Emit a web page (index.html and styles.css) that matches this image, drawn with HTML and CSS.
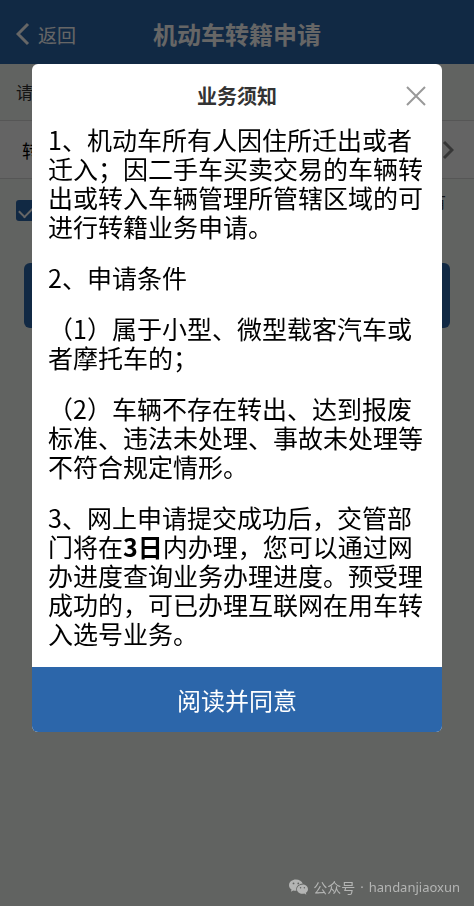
FILE: index.html
```html
<!DOCTYPE html>
<html lang="zh-CN">
<head>
<meta charset="utf-8">
<meta name="viewport" content="width=device-width, initial-scale=1">
<title>机动车转籍申请</title>
<link rel="stylesheet" href="styles.css">
</head>
<body>
<div class="page">
  <header class="topbar">
    <a class="back" href="#">
      <svg class="back-icon" viewBox="0 0 14 24" aria-hidden="true"><path d="M12 2 2 12 12 22"/></svg>
      <span>返回</span>
    </a>
    <h1 class="topbar-title">机动车转籍申请</h1>
  </header>
  <main>
    <p class="hint">请</p>
    <a class="row" href="#">
      <span>转</span>
      <svg class="row-icon" viewBox="0 0 12 20" aria-hidden="true"><path d="M2 2 10 10 2 18"/></svg>
    </a>
    <label class="consent">
      <input class="consent-box" type="checkbox" checked>
      <span class="consent-text">有</span>
    </label>
    <button class="next" type="button" aria-label="下一步"></button>
  </main>
</div>

<div class="overlay">
  <section class="dialog" role="dialog" aria-modal="true" aria-labelledby="notice-title">
    <header class="dialog-head">
      <h2 class="dialog-title" id="notice-title">业务须知</h2>
      <button class="close" type="button" aria-label="关闭">
        <svg class="close-icon" viewBox="0 0 20 20" aria-hidden="true"><path d="M1 1 19 19M19 1 1 19"/></svg>
      </button>
    </header>
    <div class="dialog-body">
      <p>1、机动车所有人因住所迁出或者迁入；因二手车买卖交易的车辆转出或转入车辆管理所管辖区域的可进行转籍业务申请。</p>
      <p>2、申请条件</p>
      <p>（1）属于小型、微型载客汽车或者摩托车的；</p>
      <p>（2）车辆不存在转出、达到报废标准、违法未处理、事故未处理等不符合规定情形。</p>
      <p>3、网上申请提交成功后，交管部门将在<strong>3日</strong>内办理，您可以通过网办进度查询业务办理进度。预受理成功的，可已办理互联网在用车转入选号业务。</p>
    </div>
    <button class="agree" type="button">阅读并同意</button>
  </section>
  <div class="watermark">
    <svg class="wechat" viewBox="0 0 36 30" aria-hidden="true">
      <path class="bubble" fill-rule="evenodd" d="M13 1C6 1 0 5.700 0 11.700c0 3.400 1.900 6.300 4.800 8.200L3.600 24l4.500-2.400c1.600.4 3.200.7 4.900.7h1.100C12 14.500 18.500 8.600 26 8.800 24.700 4.300 19.400 1 13 1ZM8.600 6.500a1.700 1.700 0 1 1 0 3.400 1.700 1.700 0 0 1 0-3.400Zm9 0a1.700 1.700 0 1 1 0 3.400 1.700 1.700 0 0 1 0-3.400Z"/>
      <path class="bubble" fill-rule="evenodd" d="M25.500 10.500c-5.800 0-10.500 3.900-10.500 8.800S19.700 28 25.500 28c1.200 0 2.400-.2 3.500-.5l3.800 2-1-3.400c2.600-1.600 4.200-4 4.200-6.800 0-4.900-4.700-8.800-10.500-8.800Zm-3.600 4.700a1.400 1.400 0 1 1 0 2.800 1.400 1.400 0 0 1 0-2.800Zm7.200 0a1.400 1.400 0 1 1 0 2.800 1.400 1.400 0 0 1 0-2.800Z"/>
    </svg>
    <span>公众号</span>
    <span class="latin">·</span>
    <span class="latin">handanjiaoxun</span>
  </div>
</div>
</body>
</html>
```
FILE: styles.css
```css
* {
  box-sizing: border-box;
}

body {
  margin: 0;
  min-height: 100vh;
  background: #f3f7f3;
  color: #333;
  font-family: "Noto Sans CJK SC", "Noto Sans", sans-serif;
}

h1, h2, p {
  margin: 0;
}

button {
  border: 0;
  font-family: inherit;
}

a {
  color: inherit;
  text-decoration: none;
}

svg {
  fill: none;
  stroke: currentColor;
}

.topbar {
  display: grid;
  grid-template-columns: 1fr auto 1fr;
  align-items: center;
  height: 64px;
  padding: 4px 16px 0;
  background: #2c66aa;
  color: #fff;
}

.back {
  display: flex;
  align-items: center;
  gap: 8px;
  font-size: 19px;
}

.back-icon {
  width: 14px;
  height: 24px;
  stroke-width: 3;
}

.topbar-title {
  font-size: 24px;
  line-height: 36px;
  font-weight: 700;
}

.hint {
  padding: 0 16px;
  font-size: 17px;
  line-height: 56px;
}

.row {
  display: flex;
  align-items: center;
  justify-content: space-between;
  height: 59px;
  padding: 0 20px 0 22px;
  border: solid #d8d8d8;
  border-width: 1px 0;
  background: #fafafa;
  color: #000;
  font-size: 18px;
}

.row-icon {
  width: 12px;
  height: 20px;
  color: #888;
  stroke-width: 3;
}

.consent {
  display: flex;
  justify-content: space-between;
  padding: 10px 28px 0 16px;
  font-size: 16px;
}

.consent-box {
  appearance: none;
  width: 21px;
  height: 21px;
  margin: 11px 0 0;
  padding: 5px 3px;
  border-radius: 3px;
  background: #2c66aa;
}

.consent-box:checked::before {
  content: "";
  display: block;
  width: 14px;
  height: 7px;
  border: solid #fff;
  border-width: 0 0 2px 2px;
  transform: rotate(-45deg);
}

.next {
  display: block;
  width: calc(100% - 48px);
  height: 65px;
  margin: 42px auto 0;
  border-radius: 6px;
  background: #2c66aa;
}

.overlay {
  position: fixed;
  inset: 0;
  display: flex;
  flex-direction: column;
  justify-content: space-between;
  padding: 64px 32px 8px;
  background: rgba(0, 0, 0, 0.6);
}

.dialog {
  border-radius: 6px;
  background: #fff;
}

.dialog-head {
  display: grid;
  grid-template-columns: 1fr auto 1fr;
  align-items: center;
  height: 61px;
  padding: 3px 16px 0;
}

.dialog-title {
  grid-column: 2;
  font-size: 20px;
  line-height: 30px;
  font-weight: 700;
}

.close {
  justify-self: end;
  display: flex;
  padding: 0;
  background: none;
  color: #999;
}

.close-icon {
  width: 20px;
  height: 20px;
  stroke-width: 2;
}

.dialog-body {
  display: grid;
  gap: 22px;
  padding: 0 16px 19px;
  color: #000;
  font-size: 25px;
  line-height: 29px;
  text-spacing-trim: space-all;
}

.agree {
  display: block;
  width: 100%;
  height: 65px;
  border-radius: 0 0 6px 6px;
  background: #2c66aa;
  color: #fff;
  font-size: 24px;
}

.watermark {
  display: flex;
  align-self: flex-end;
  align-items: center;
  gap: 5px;
  margin-right: -18px;
  color: #b4b5b4;
  font-size: 14px;
  line-height: 22px;
}

.latin {
  font-family: "Noto Sans", sans-serif;
  font-size: 13px;
}

.wechat {
  width: 19px;
  height: 16px;
}

.bubble {
  fill: currentColor;
  stroke: none;
}
```
